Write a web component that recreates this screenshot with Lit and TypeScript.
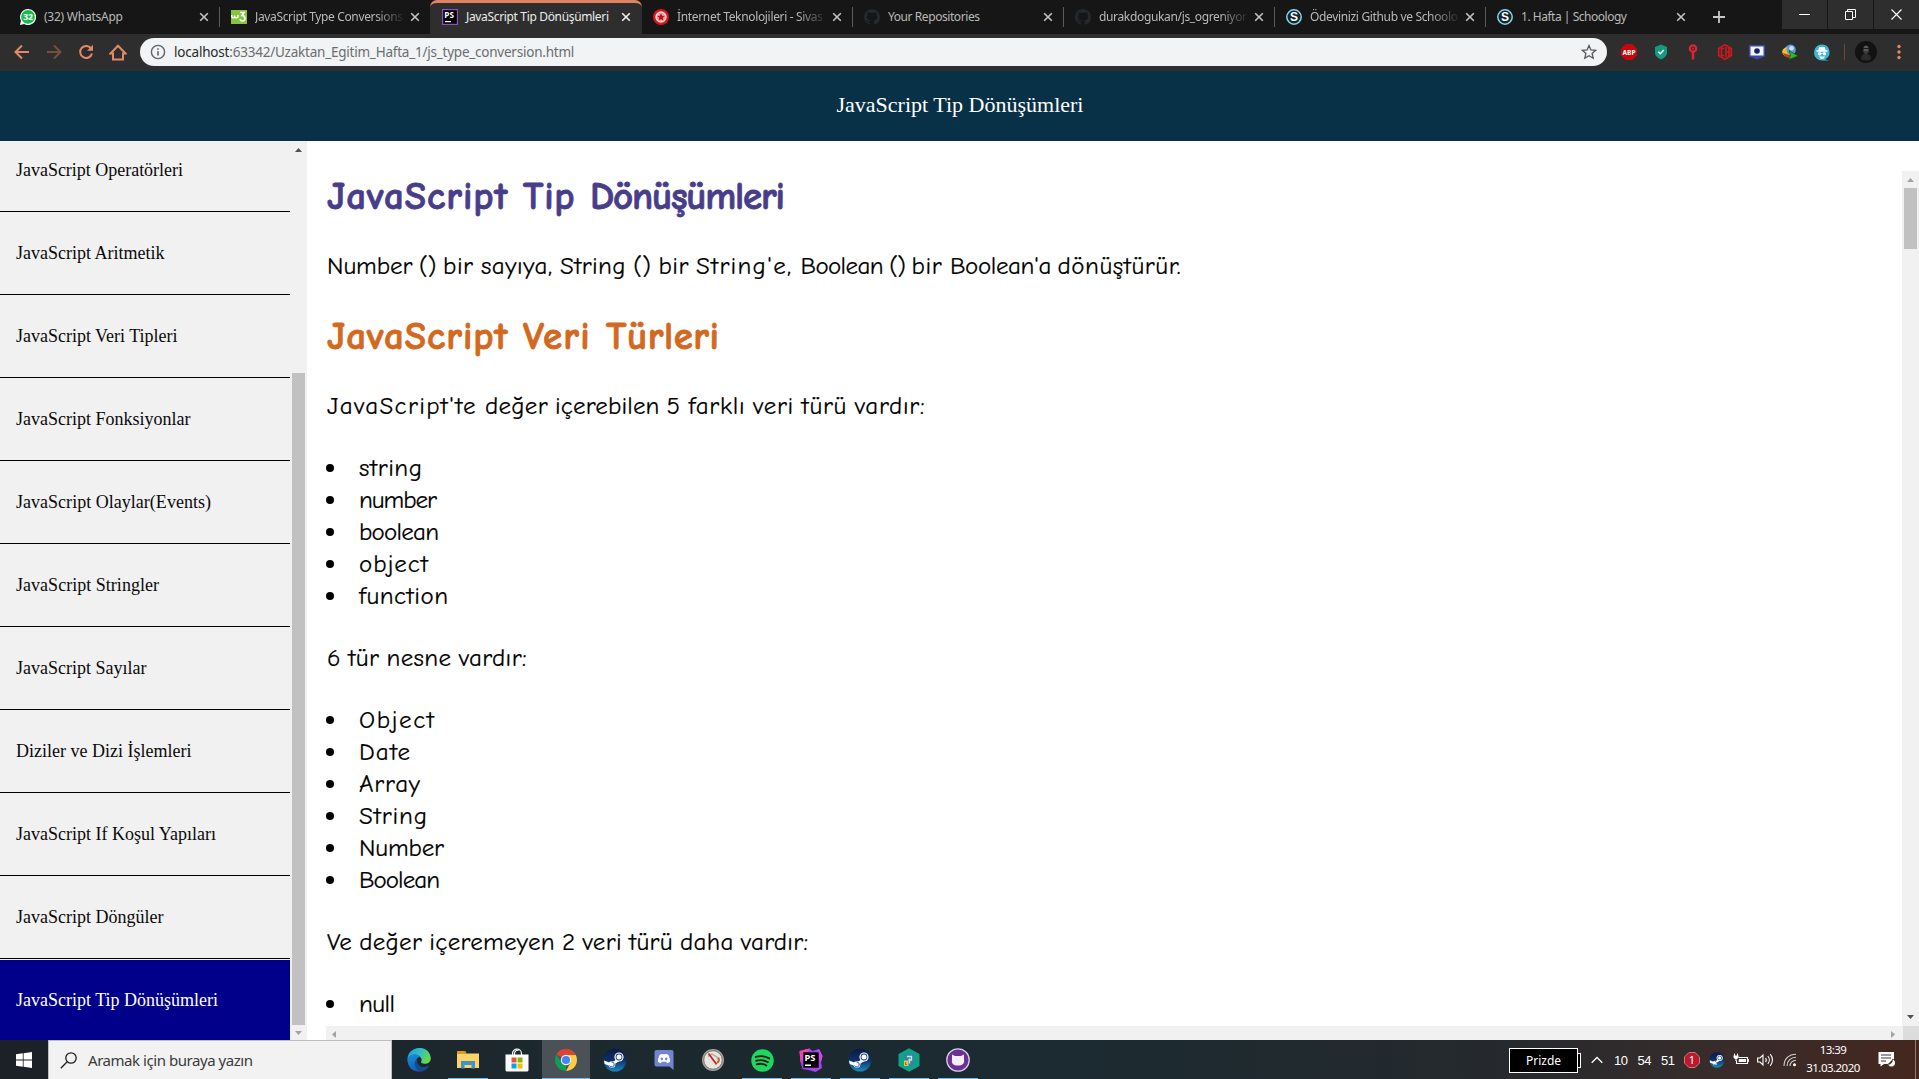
import { LitElement, html, css, nothing } from "lit";
import { customElement, property } from "lit/decorators.js";

/** Single line of text whose letter spacing is tuned so that it spans `w` pixels. */
@customElement("fit-text")
class FitText extends LitElement {
  @property({ type: Number }) w = 0;
  static styles = css`
    :host { display: inline-block; white-space: pre; }
    .run { display: inline-block; white-space: pre; }
  `;
  firstUpdated() {
    const run = this.renderRoot.querySelector(".run") as HTMLElement;
    const text = this.textContent || "";
    const gaps = text.endsWith(" ") ? text.length : text.length - 1;
    if (!this.w || gaps < 1) return;
    const natural = run.getBoundingClientRect().width;
    run.style.letterSpacing = ((this.w - natural) / gaps).toFixed(3) + "px";
  }
  render() {
    return html`<span class="run"><slot></slot></span>`;
  }
}

const steam = (size: number) => html`<svg width=${size} height=${size} viewBox="0 0 24 24">
  <defs><linearGradient id="st" x1="0" y1="0" x2="0" y2="1"><stop offset="0" stop-color="#0b1a45"/><stop offset=".5" stop-color="#0d2f66"/><stop offset="1" stop-color="#1c8ac4"/></linearGradient></defs>
  <circle cx="12" cy="12" r="11.5" fill="url(#st)"/>
  <path d="M1 12.5 7.5 15 12 12.5 15 8l3 4-5.500 3.500L9.500 19 1.600 16z" fill="#fff"/>
  <circle cx="16" cy="9" r="4.600" fill="#fff"/><circle cx="16" cy="9" r="3.400" fill="#16407a"/><circle cx="16" cy="9" r="2.500" fill="#fff"/>
  <circle cx="9" cy="16.500" r="3.300" fill="#fff"/><path d="M6.500 17.500a2.500 2.500 0 1 0 2-3.500" fill="none" stroke="#16508f" stroke-width=".9"/>
</svg>`;

const github = html`<svg width="16" height="16" viewBox="0 0 16 16"><path fill="#24292e" d="M8 0C3.580 0 0 3.580 0 8c0 3.540 2.290 6.530 5.470 7.590.4.070.55-.17.55-.38 0-.19-.01-.82-.01-1.490-2.010.37-2.530-.49-2.690-.94-.09-.23-.48-.94-.82-1.130-.28-.15-.68-.52-.01-.53.63-.01 1.080.58 1.230.82.72 1.210 1.870.87 2.330.66.07-.52.28-.87.51-1.070-1.780-.2-3.640-.89-3.640-3.950 0-.87.31-1.590.82-2.150-.08-.2-.36-1.020.08-2.120 0 0 .67-.21 2.200.82.64-.18 1.320-.27 2-.27s1.360.09 2 .27c1.530-1.040 2.200-.82 2.200-.82.44 1.100.16 1.920.08 2.120.51.56.82 1.270.82 2.150 0 3.070-1.870 3.750-3.650 3.950.29.25.54.73.54 1.480 0 1.070-.01 1.930-.01 2.200 0 .21.15.46.55.38A8.010 8.010 0 0 0 16 8c0-4.420-3.580-8-8-8z"/></svg>`;

const schoology = html`<svg width="16" height="16" viewBox="0 0 16 16"><circle cx="8" cy="8" r="7.200" fill="#17252c" stroke="#86d3ee" stroke-width="1.500"/><text x="8" y="12.300" text-anchor="middle" font-family="Liberation Sans, sans-serif" font-weight="bold" font-size="12" fill="#fff">S</text></svg>`;

const favicons: Record<string, unknown> = {
  whatsapp: html`<svg width="16" height="16" viewBox="0 0 16 16"><path d="M8 0a8 8 0 1 1-3.800 15L0 16l1-4.200A8 8 0 0 1 8 0z" fill="#fff"/><circle cx="8" cy="7.900" r="6.900" fill="#16bd4e"/><text x="8" y="11.200" text-anchor="middle" font-family="Noto Sans, sans-serif" font-weight="bold" font-size="8.500" fill="#fff">32</text></svg>`,
  w3: html`<svg width="16" height="16" viewBox="0 0 16 16"><rect y="1" width="16" height="14" fill="#85c440"/><path d="M.8 6v1.500c0 1.800 2.800 1.800 2.800 0V6.500M3.600 7.500c0 1.800 3.400 1.800 3.400 0V6" fill="none" stroke="#fff" stroke-width="1.400"/><path d="M9 3.500h4L11 6.500c4 0 3.500 5.500.5 5.500-1.300 0-2.200-.6-2.500-1.700" fill="none" stroke="#fff" stroke-width="1.700"/></svg>`,
  ps: html`<svg width="16" height="16" viewBox="0 0 16 16"><rect x=".6" y=".6" width="14.800" height="14.800" fill="#000" stroke="#8d4fc4" stroke-width="1.200"/><text x="2.300" y="8.900" font-family="Noto Sans, sans-serif" font-weight="bold" font-size="8.200" fill="#fff">PS</text><rect x="3" y="12" width="6" height="1.200" fill="#fff"/></svg>`,
  sivas: html`<svg width="16" height="16" viewBox="0 0 16 16"><circle cx="8" cy="8" r="8" fill="#d9151b"/><circle cx="8" cy="8" r="5" fill="#f3a0a2" stroke="#fbd9da" stroke-width="1.400"/><path d="m8 4.300 1.200 2.400 2.600.3-1.900 1.800.5 2.700L8 10.200l-2.400 1.300.5-2.700L4.200 7l2.600-.3z" fill="#c60f16"/></svg>`,
  github,
  schoology,
};

const closeX = (color: string) => html`<svg width="10" height="10" viewBox="0 0 10 10"><path d="m1.200 1.200 7.600 7.600m0-7.600L1.200 8.800" stroke=${color} stroke-width="1.600"/></svg>`;

const tabs = [
  { icon: "whatsapp", title: "(32) WhatsApp", w: 79, active: false },
  { icon: "w3", title: "JavaScript Type Conversions", w: 148, active: false },
  { icon: "ps", title: "JavaScript Tip Dönüşümleri", w: 143, active: true },
  { icon: "sivas", title: "İnternet Teknolojileri - Sivas", w: 146, active: false },
  { icon: "github", title: "Your Repositories", w: 92, active: false },
  { icon: "github", title: "durakdogukan/js_ogreniyor", w: 148, active: false },
  { icon: "schoology", title: "Ödevinizi Github ve Schoolo", w: 148, active: false },
  { icon: "schoology", title: "1. Hafta | Schoology", w: 106, active: false },
];

@customElement("browser-chrome")
class BrowserChrome extends LitElement {
  static styles = css`
    :host { display: block; height: 71px; flex: none; background: #2e2e2e; font-family: "Noto Sans", "Open Sans", sans-serif; }
    svg { display: block; }
    .strip { display: flex; height: 34px; background: #161616; padding-left: 8px; }
    .tab { display: flex; align-items: center; width: 211px; height: 34px; box-sizing: border-box; padding: 0 10px 0 12px; position: relative; color: #b9b9b9; font-size: 12px; line-height: 20px; }
    .label { width: 149px; height: 20px; margin: 0 6px 0 8px; -webkit-mask-image: linear-gradient(90deg, #000 120px, transparent 151px); }
    .label.whole { -webkit-mask-image: none; }
    .tab.line::after { content: ""; position: absolute; right: -1px; top: 7px; width: 1px; height: 20px; background: #5a5a5a; }
    .active { background: #2e2e2e; border-top: 3px solid #df8360; border-radius: 7px 7px 0 0; color: #ececec; padding-bottom: 3px; width: 212px; margin-right: -1px; padding-right: 11px; }
    .plus { width: 46px; display: flex; align-items: center; justify-content: center; }
    .window { display: flex; margin-left: auto; height: 29px; gap: 1px; }
    .window span { display: flex; align-items: center; justify-content: center; width: 45px; background: #2e2e2e; }
    .bar { display: flex; align-items: center; height: 36px; padding-left: 6px; }
    .nav { display: flex; width: 32px; justify-content: center; }
    .omni { display: flex; align-items: center; box-sizing: border-box; width: 1467px; height: 28px; border-radius: 14px; background: #f1f3f4; margin-left: 6px; padding: 0 10px; color: #6a6d70; font-size: 13.500px; line-height: 24px; }
    .url { display: flex; margin-left: 8px; flex: 1; }
    .host { color: #27292b; }
    .exts { display: flex; margin-left: 6px; }
    .exts span { width: 32.100px; display: flex; justify-content: center; }
    .divider { width: 1px; height: 16px; background: #6a4a40; margin: 0 0 0 6px; }
    .avatar { margin-left: 10px; }
    .dots { margin-left: 20px; }
  `;
  render() {
    return html`
      <div class="strip">
        ${tabs.map((t, i) => html`<div class="tab ${t.active ? "active" : ""} ${i !== 1 && i !== 2 && i !== 7 ? "line" : ""}">
          ${favicons[t.icon]}
          <div class="label ${t.w < 146 ? "whole" : ""}"><fit-text w=${t.w}>${t.title}</fit-text></div>
          ${closeX(t.active ? "#f0f0f0" : "#c4c4c4")}
        </div>`)}
        <div class="plus"><svg width="14" height="14" viewBox="0 0 14 14"><path d="M7 1v12M1 7h12" stroke="#c8c8c8" stroke-width="1.800"/></svg></div>
        <div class="window">
          <span><svg width="11" height="11" viewBox="0 0 11 11"><path d="M0 5.500h11" stroke="#fff"/></svg></span>
          <span><svg width="11" height="11" viewBox="0 0 11 11"><path d="M.5 2.500h7v8h-7zM2.500 2.500v-2h8v8h-3" fill="none" stroke="#fff"/></svg></span>
          <span><svg width="11" height="11" viewBox="0 0 11 11"><path d="m.5.5 10 10m0-10-10 10" stroke="#fff" stroke-width="1.200"/></svg></span>
        </div>
      </div>
      <div class="bar">
        <span class="nav"><svg width="16" height="16" viewBox="0 0 16 16"><path d="M15 8H2M8 1.500 1.500 8 8 14.500" fill="none" stroke="#e28a68" stroke-width="2"/></svg></span>
        <span class="nav"><svg width="16" height="16" viewBox="0 0 16 16"><path d="M1 8h13M8 1.500 14.500 8 8 14.500" fill="none" stroke="#73503f" stroke-width="2"/></svg></span>
        <span class="nav"><svg width="16" height="16" viewBox="0 0 16 16"><path d="M13.300 4.800A6 6 0 1 0 14 9.500" fill="none" stroke="#e28a68" stroke-width="2"/><path d="M15 .8v6H9z" fill="#e28a68"/></svg></span>
        <span class="nav"><svg width="18" height="17" viewBox="0 0 18 17"><path d="M1.500 9.500 9 1.800l7.500 7.700H14v6H4v-6z" fill="none" stroke="#e28a68" stroke-width="2"/></svg></span>
        <div class="omni">
          <svg width="16" height="16" viewBox="0 0 16 16"><circle cx="8" cy="8" r="6.600" fill="none" stroke="#5f6368" stroke-width="1.400"/><path d="M8 7.200v4.300M8 4.300v1.500" stroke="#5f6368" stroke-width="1.600"/></svg>
          <div class="url"><fit-text class="host" w="55.500">localhost</fit-text><fit-text w="345">:63342/Uzaktan_Egitim_Hafta_1/js_type_conversion.html</fit-text></div>
          <svg width="16" height="16" viewBox="0 0 16 16"><path d="m8 1.500 1.900 4.400 4.800.4-3.600 3.200 1.100 4.700L8 11.700l-4.200 2.500 1.100-4.700L1.300 6.300l4.800-.4z" fill="none" stroke="#55585c" stroke-width="1.300"/></svg>
        </div>
        <div class="exts">
          <span><svg width="16" height="16" viewBox="0 0 16 16"><path d="M4.700 0h6.600L16 4.700v6.600L11.300 16H4.700L0 11.300V4.700z" fill="#c8060c"/><text x="1.500" y="10.800" textLength="13" lengthAdjust="spacingAndGlyphs" font-family="Noto Sans, sans-serif" font-weight="bold" font-size="7.600" fill="#fff">ABP</text></svg></span>
          <span><svg width="14" height="16" viewBox="0 0 14 16"><path d="M7 .5 13 3v6c0 3-3.500 5.500-6 6.500C4.500 14.500 1 12 1 9V3z" fill="#159a80"/><path d="m4.300 7.700 2 2 3.500-3.700" fill="none" stroke="#fff" stroke-width="1.500"/></svg></span>
          <span><svg width="10" height="16" viewBox="0 0 10 16"><circle cx="5" cy="4.500" r="3.200" fill="none" stroke="#dd2430" stroke-width="2.300"/><circle cx="5" cy="4.500" r="1" fill="#dd2430"/><path d="M5 7v8.500" stroke="#dd2430" stroke-width="2.600"/></svg></span>
          <span><svg width="16" height="16" viewBox="0 0 16 16"><path d="m8 .8 6.300 3.600v7.200L8 15.200l-6.300-3.600V4.400z" fill="none" stroke="#cf1820" stroke-width="1.700"/><path d="M7.300 4.500H4.500v7h2.800M9 3v10m3-9v8M9 8h3" fill="none" stroke="#cf1820" stroke-width="1.700"/></svg></span>
          <span><svg width="16" height="16" viewBox="0 0 16 16"><path d="M0 1h16v11.500L8 15.500 0 12.500z" fill="#3b46b0"/><path d="M1.500 2.500h13v9h-13z" fill="#f3f4ff"/><circle cx="8" cy="7" r="2.800" fill="#18216a"/></svg></span>
          <span><svg width="17" height="16" viewBox="0 0 17 16"><circle cx="9.500" cy="5.800" r="5.300" fill="#5e9adf"/><circle cx="10.500" cy="4.300" r="2.300" fill="#c9e3ff"/><path d="M6 3c-7 2-6.500 9 2 10 2.500.2 3-.6 3.500-2C7 11 4.500 8 6 3z" fill="#f0c22a"/><path d="M2 9c1.500 5 7 6.500 10 3l-5-1.500z" fill="#c43c1c"/><path d="m8 6.500 9 5.500-9 3.500 1.500-4.500z" fill="#35b435" stroke="#145c14" stroke-width=".8"/></svg></span>
          <span><svg width="16" height="17" viewBox="0 0 16 17"><path d="M8 .5a7.700 7.700 0 0 1 3 14.700l4 1.300H8A8 8 0 0 1 8 .5z" fill="#3fb8d6"/><path d="m5.300 3 5.400 0 1 3.300h1.800v1.400h-11V6.300h1.800z" fill="#fff"/><circle cx="5.600" cy="9.800" r="1.700" fill="#fff"/><circle cx="10.400" cy="9.800" r="1.700" fill="#fff"/><path d="M5 12.500h6l-1.500 2.200h-3zM6 9.200h4v.9H6z" fill="#fff"/></svg></span>
        </div>
        <div class="divider"></div>
        <svg class="avatar" width="22" height="22" viewBox="0 0 22 22"><circle cx="11" cy="11" r="11" fill="#121212"/><path d="M8.500 7c0-3.500 5-3.500 5 0v3.500c0 3-5 3-5 0z" fill="#5a5a5a"/><path d="M6 18c0-4 2-5 5-5s5 1 5 5c-2 2-8 2-10 0z" fill="#2b2b2b"/><path d="M8 7.500h6M9 11h4" stroke="#1c1c1c"/></svg>
        <svg class="dots" width="4" height="16" viewBox="0 0 4 16"><g fill="#e28a68"><circle cx="2" cy="2.500" r="1.700"/><circle cx="2" cy="8" r="1.700"/><circle cx="2" cy="13.500" r="1.700"/></g></svg>
      </div>`;
  }
}

const links: [string, number][] = [
  ["JavaScript Operatörleri", 167],
  ["JavaScript Aritmetik", 148.500],
  ["JavaScript Veri Tipleri", 161.500],
  ["JavaScript Fonksiyonlar", 174.500],
  ["JavaScript Olaylar(Events)", 195],
  ["JavaScript Stringler", 143],
  ["JavaScript Sayılar", 130.500],
  ["Diziler ve Dizi İşlemleri", 175.500],
  ["JavaScript If Koşul Yapıları", 200],
  ["JavaScript Döngüler", 147.500],
];

@customElement("lesson-nav")
class LessonNav extends LitElement {
  static styles = css`
    :host { display: flex; width: 307px; flex: none; background: #f1f1f1; overflow: hidden; }
    .list { width: 290px; color: #0a0a0a; font-family: "Liberation Serif", serif; font-size: 18px; }
    .item { display: block; height: 83px; box-sizing: border-box; border-bottom: 1px solid #000; padding: 24px 0 0 16px; line-height: 34px; }
    .item:first-child { height: 71px; padding-top: 12px; }
    .current { height: 80px; margin-top: 1px; background: #00008b; color: #fff; border: 0; padding-top: 23px; }
    .scroll { width: 17px; display: flex; flex-direction: column; align-items: center; }
    .scroll svg { display: block; }
    .up { margin-top: 7px; }
    .thumb { width: 13px; height: 652px; background: #c1c1c1; margin: 221px 0 6px; }
  `;
  render() {
    return html`
      <div class="list">
        ${links.map(([t, w]) => html`<a class="item"><fit-text w=${w}>${t}</fit-text></a>`)}
        <a class="item current"><fit-text w="202">JavaScript Tip Dönüşümleri</fit-text></a>
      </div>
      <div class="scroll">
        <svg class="up" width="7" height="4" viewBox="0 0 7 4"><path d="M0 4 3.500 0 7 4z" fill="#505050"/></svg>
        <div class="thumb"></div>
        <svg width="7" height="4" viewBox="0 0 7 4"><path d="M0 0h7L3.500 4z" fill="#a3a3a3"/></svg>
      </div>`;
  }
}

@customElement("lesson-body")
class LessonBody extends LitElement {
  static styles = css`
    :host { display: flex; flex: 1; min-width: 0; background: #fff; }
    .col { display: flex; flex-direction: column; flex: 1; padding-left: 19px; min-width: 0; }
    .text { height: 885px; overflow: hidden; color: #000; font-family: "Comic Sans MS", "Comic Neue", Inter, "Noto Sans", sans-serif; font-size: 25px; line-height: 32px; word-spacing: -1.500px; -webkit-text-stroke: 0.2px currentColor; }
    h1, h2 { display: flex; padding-left: 1px; font-size: 39px; height: 50px; line-height: 52px; font-weight: 700; word-spacing: 0; -webkit-text-stroke: 0.8px currentColor; }
    h1 { color: #483d8b; margin: 30px 0 29px; }
    h2 { color: #d2691e; margin: -1px 0 29px; }
    p { display: flex; margin: 0 0 30px; height: 32px; padding-left: 1px; }
    ul { list-style: none; margin: 0 0 30px; padding: 0; }
    li { display: flex; align-items: center; height: 32px; }
    li::before { content: ""; width: 8px; height: 8px; border-radius: 50%; background: #000; margin-right: 25px; }
    svg { display: block; }
    .hscroll { height: 14px; background: #f1f1f1; display: flex; align-items: center; justify-content: space-between; padding: 2px 7px 0 6px; box-sizing: border-box; }
    .vscroll { width: 17px; display: flex; flex-direction: column; align-items: center; margin-top: 30px; background: #f1f1f1; }
    .vscroll .up { margin: 7px 0 6px; }
    .thumb { width: 13px; height: 61px; background: #c1c1c1; }
    .vscroll .down { margin: auto 0 7px; }
    .corner { width: 16px; height: 14px; background: #dcdcdc; align-self: flex-end; }
  `;
  private runs(parts: [string, number][]) {
    return parts.map(([t, w]) => html`<fit-text w=${w}>${t}</fit-text>`);
  }
  private bullets(items: [string, number][]) {
    return html`<ul>${items.map(([t, w]) => html`<li><fit-text w=${w}>${t}</fit-text></li>`)}</ul>`;
  }
  render() {
    return html`
      <div class="col">
        <div class="text">
          <h1>${this.runs([["JavaScript ", 196], ["Tip ", 67], ["Dönüşümleri", 195]])}</h1>
          <p>${this.runs([["Number () ", 116], ["bir sayıya, ", 117], ["String () ", 98.500], ["bir ", 37.500], ["String'e, ", 104.500], ["Boolean () ", 111], ["bir ", 38.500], ["Boolean'a ", 107.500], ["dönüştürür.", 123]])}</p>
          <h2>${this.runs([["JavaScript ", 196], ["Veri ", 83], ["Türleri", 113]])}</h2>
          <p>${this.runs([["JavaScript'te ", 158], ["değer ", 70], ["içerebilen ", 111.500], ["5 farklı ", 86.500], ["veri türü vardır:", 171.500]])}</p>
          ${this.bullets([["string", 63], ["number", 78], ["boolean", 80], ["object", 69], ["function", 89]])}
          <p><fit-text w="199.500">6 tür nesne vardır:</fit-text></p>
          ${this.bullets([["Object", 75], ["Date", 51], ["Array", 61], ["String", 68], ["Number", 85], ["Boolean", 81]])}
          <p><fit-text w="481">Ve değer içeremeyen 2 veri türü daha vardır:</fit-text></p>
          ${this.bullets([["null", 36]])}
        </div>
        <div class="hscroll">
          <svg width="4" height="7" viewBox="0 0 4 7"><path d="M4 0v7L0 3.500z" fill="#a3a3a3"/></svg>
          <svg width="4" height="7" viewBox="0 0 4 7"><path d="M0 0v7l4-3.500z" fill="#a3a3a3"/></svg>
        </div>
      </div>
      <div class="vscroll">
        <svg class="up" width="7" height="4" viewBox="0 0 7 4"><path d="M0 4 3.500 0 7 4z" fill="#a3a3a3"/></svg>
        <div class="thumb"></div>
        <svg class="down" width="7" height="4" viewBox="0 0 7 4"><path d="M0 0h7L3.500 4z" fill="#505050"/></svg>
        <div class="corner"></div>
      </div>`;
  }
}

const apps: { art: unknown; run?: boolean; front?: boolean }[] = [
  { art: html`<svg width="24" height="24" viewBox="0 0 24 24"><defs><linearGradient id="e1" x1="0" y1="0" x2="1" y2=".4"><stop offset="0" stop-color="#1d9ae0"/><stop offset=".6" stop-color="#31c3c0"/><stop offset="1" stop-color="#64d84f"/></linearGradient><linearGradient id="e2" x1="0" y1="0" x2=".6" y2="1"><stop offset="0" stop-color="#1a8fdc"/><stop offset="1" stop-color="#1457b0"/></linearGradient></defs><path d="M.5 10.500C2-3.500 23-3.500 23.800 10.200c0 4-3.200 5.600-6 5.600-3.200 0-4.300-1.200-3.500-2.500C16.500 9.500 8 2.500.5 10.500z" fill="url(#e1)"/><path d="M.3 10.800C3 5.500 10.500 5 13 9c-6 1-5.500 10 3.500 10.200 2.500 0 4.200-.8 5.500-1.500C17 26.500.5 26 .3 10.800z" fill="url(#e2)"/><path d="M10.500 10.500c-5.500 4-2.500 11.500 3.500 13 4-.4 6.600-3 8-5.800-6.500 3.300-13 .3-11.500-7.200z" fill="#144a8e"/></svg>` },
  { run: true, art: html`<svg width="22" height="20" viewBox="0 0 22 20"><path d="M0 1.500h8l2 2H0z" fill="#d99a1c"/><path d="M0 3.500h22V18H0z" fill="#fbd366"/><path d="M0 1h8.500v3H0z" fill="#dd9a1e"/><path d="M4 11h14v7.500h-3.500V15h-7v3.500H4z" fill="#3b94cf"/></svg>` },
  { art: html`<svg width="24" height="24" viewBox="0 0 24 24"><path d="M7.500 7V5.500a4.500 4.500 0 0 1 9 0V7M9.500 7V5.500a4 4 0 0 1 5-3.500" fill="none" stroke="#fff" stroke-width="1.200"/><path d="M.5 6.500h23v16l-1 1h-21l-1-1z" fill="#fff"/><path d="M6.500 9.500h5v5h-5z" fill="#f25022"/><path d="M12.500 9.500h5v5h-5z" fill="#7fba00"/><path d="M6.500 15.500h5v5h-5z" fill="#00a4ef"/><path d="M12.500 15.500h5v5h-5z" fill="#ffb900"/></svg>` },
  { run: true, front: true, art: html`<svg width="22" height="22" viewBox="0 0 22 22"><path d="M11 11 1.500 5.500A11 11 0 0 1 20.500 5.500z" fill="#db4437"/><path d="M11 11 11 22A11 11 0 0 1 1.500 5.500L6.500 13.500z" fill="#0f9d58"/><path d="M11 6h9.800A11 11 0 0 1 11 22l4.500-8.500z" fill="#ffcd40"/><path d="M1.500 5.500A11 11 0 0 1 20.700 6H11z" fill="#db4437"/><circle cx="11" cy="11" r="5.200" fill="#f4f4f4"/><circle cx="11" cy="11" r="4.100" fill="#4285f4"/></svg>` },
  { art: steam(24) },
  { art: html`<svg width="20" height="22" viewBox="0 0 20 22"><path d="M2.500 1h15A2 2 0 0 1 19.500 3v18l-4-3.500h-13a2 2 0 0 1-2-2V3a2 2 0 0 1 2-2z" fill="#7285d0"/><path d="M5.800 5.800c1.500-1 2.300-.8 2.500-.5h3.400c.2-.3 1-.5 2.500.5 1.500 2.500 2 5 1.800 7-1 1-2.200 1.200-3 1.200l-.8-1.300H7.800L7 14c-.8 0-2-.2-3-1.200-.2-2 .3-4.500 1.800-7z" fill="#fff"/><ellipse cx="7.800" cy="10" rx="1.200" ry="1.400" fill="#7285d0"/><ellipse cx="12.200" cy="10" rx="1.200" ry="1.400" fill="#7285d0"/></svg>` },
  { art: html`<svg width="24" height="24" viewBox="0 0 24 24"><circle cx="12" cy="12" r="11" fill="#a6a39f"/><circle cx="12" cy="12" r="9.300" fill="#e9e6df" stroke="#77736f" stroke-width="1"/><path d="M7 8.500 11 6l5 3 1.500 4-3 4" fill="none" stroke="#b8b0a4" stroke-width="1.500"/><path d="m7.500 5.500 7.800 10.500" stroke="#c4201e" stroke-width="1.700"/><path d="M17.500 9.500c1 2 .5 4-1 5.500" fill="none" stroke="#d4552b" stroke-width="1.500"/></svg>` },
  { run: true, art: html`<svg width="23" height="23" viewBox="0 0 24 24"><circle cx="12" cy="12" r="11.700" fill="#1ed760"/><path d="M5 8.300c4.500-1.400 10-.9 14 1.500M5.500 12.300c4-1.200 8.300-.7 12 1.400M6 16c3.400-1 7-.6 10 1.200" fill="none" stroke="#142018" stroke-width="2" stroke-linecap="round"/></svg>` },
  { run: true, art: html`<svg width="24" height="24" viewBox="0 0 24 24"><path d="m.5 3 10-2.500 3 2.500 6.500-2 3.500 7-1.500 6 1 6-6.500 4-7-2-6-1L1.500 14z" fill="#a445ec"/><path d="m.5 3 10-2.500L6 10 1.500 14z" fill="#ef45a9"/><path d="m20 1 3.500 7-1.500 6-5-8z" fill="#c44cf1"/><path d="M4.300 4.300h15.400v15.400H4.300z" fill="#000"/><text x="5.500" y="12.500" font-family="Noto Sans, sans-serif" font-weight="bold" font-size="9.300" fill="#fff">PS</text><path d="M6 16.500h6V18H6z" fill="#fff"/></svg>` },
  { run: true, art: steam(24) },
  { run: true, art: html`<svg width="22" height="24" viewBox="0 0 22 24"><path d="M11 .3 21.500 6v12L11 23.700.5 18V6z" fill="#0ea287"/><path d="M6.500 6h9.500v12H6.500z" fill="#2f86a8"/><path d="M9 8.500h4.500V12h-3M11.500 10.500v5" fill="none" stroke="#cde5ef" stroke-width="1.300"/><path d="M6 12.500h4.500V18H6z" fill="#edc14f"/><path d="M7.500 14v2.500h1.500" stroke="#7a5a10" fill="none" stroke-width=".8"/></svg>` },
  { run: true, art: html`<svg width="24" height="24" viewBox="0 0 24 24"><circle cx="12" cy="12" r="11.200" fill="#6c2f93" stroke="#d8cce2" stroke-width="1.300"/><path d="m6 6.500 3 1.500h6l3-1.500v5.500c.8 3.500-1.500 5.500-6 5.500s-6.800-2-6-5.500z" fill="#f4eff7"/></svg>` },
];

@customElement("task-bar")
class TaskBar extends LitElement {
  static styles = css`
    :host { display: flex; height: 39px; flex: none; color: #fff; font-family: "Noto Sans", "Open Sans", sans-serif; background: linear-gradient(90deg, #1b2126 0, #1c282e 25%, #1b2b31 55%, #25292d 78%, #372c2b 89%, #44271f 100%); }
    svg { display: block; }
    .start { width: 48px; display: flex; align-items: center; justify-content: center; padding-top: 1px; box-sizing: border-box; }
    .search { width: 344px; box-sizing: border-box; background: #f2f2f2; border: 1px solid #bdbdbd; border-bottom: 0; color: #3b3b3b; display: flex; align-items: center; padding-left: 11px; font-size: 15px; line-height: 24px; }
    .search fit-text { margin: 0 0 1px 11px; }
    .apps { display: flex; gap: 1px; margin-left: 3px; }
    .app { width: 48px; height: 39px; display: flex; align-items: center; justify-content: center; box-sizing: border-box; padding-top: 1px; position: relative; }
    .run::after { content: ""; position: absolute; left: 4px; right: 4px; bottom: 0; height: 1px; background: #76b9ed; }
    .front { background: #4a5257; }
    .front::after { left: 0; right: 0; }
    .tray { margin-left: auto; display: flex; align-items: center; padding-right: 3px; }
    .battery { box-sizing: border-box; width: 69px; height: 25px; border: 1px solid #fff; background: #000; display: flex; justify-content: center; align-items: center; font-size: 12px; line-height: 20px; margin-top: 2px; }
    .nub { width: 2px; height: 13px; border: 1px solid #fff; border-left: 0; background: #000; margin-top: 2px; }
    .temps { display: flex; gap: 10px; width: 66px; margin: 1px 0 0 11px; font-family: "Liberation Sans", sans-serif; font-size: 13px; }
    .slot { width: 24.400px; display: flex; justify-content: center; padding-top: 1px; }
    .chev { margin: 1px 0 0 10px; }
    .clock { display: flex; flex-direction: column; align-items: center; width: 62px; font-size: 11.500px; line-height: 18px; margin-bottom: 1px; }
    .note { margin-left: 14px; }
    .edge { width: 1px; height: 39px; background: #8c7a76; margin-left: 20px; }
  `;
  render() {
    return html`
      <div class="start"><svg width="16" height="16" viewBox="0 0 16 16"><path d="M0 2.200 6.800 1.300V7.600H0zM7.600 1.200 16 0v7.600H7.600zM0 8.400h6.800v6.300L0 13.800zM7.600 8.400H16V16l-8.400-1.200z" fill="#fff"/></svg></div>
      <div class="search">
        <svg width="17" height="17" viewBox="0 0 17 17"><circle cx="11" cy="6" r="5.200" fill="none" stroke="#222" stroke-width="1.300"/><path d="M7.200 9.800.8 16.200" stroke="#222" stroke-width="1.400"/></svg>
        <fit-text w="165">Aramak için buraya yazın</fit-text>
      </div>
      <div class="apps">${apps.map((a) => html`<div class="app ${a.run ? "run" : ""} ${a.front ? "front" : ""}">${a.art || nothing}</div>`)}</div>
      <div class="tray">
        <div class="battery"><fit-text w="35">Prizde</fit-text></div><div class="nub"></div>
        <svg class="chev" width="12" height="8" viewBox="0 0 12 8"><path d="M.7 6.800 6 1.500l5.300 5.300" fill="none" stroke="#fff" stroke-width="1.300"/></svg>
        <div class="temps"><fit-text w="14">10</fit-text><fit-text w="14">54</fit-text><fit-text w="14">51</fit-text></div>
        <span class="slot"><svg width="16" height="16" viewBox="0 0 16 16"><path d="M4.900.5h6.200l4.400 4.400v6.200l-4.400 4.400H4.900L.5 11.100V4.900z" fill="#b91b2c" stroke="#e58a90" stroke-width=".8"/><text x="8" y="12" text-anchor="middle" font-family="Noto Sans, sans-serif" font-size="11" fill="#fff">1</text></svg></span>
        <span class="slot">${steam(16)}</span>
        <span class="slot"><svg width="16" height="14" viewBox="0 0 16 14"><path d="M5.500 4.500h9v6h-11v-3" fill="none" stroke="#fff" stroke-width="1.100"/><path d="M6 6h7v3H5.500z" fill="#fff"/><path d="M15.300 6v3M1.500.5v2.500M4.500.5v2.500M3 6v2" stroke="#fff" stroke-width="1.100"/><path d="M.5 2.500h5v1.700L4.200 6H1.800L.5 4.200z" fill="#fff"/></svg></span>
        <span class="slot"><svg width="17" height="14" viewBox="0 0 17 14"><path d="M.6 5h2.400l3-3v10l-3-3H.6zM8.500 5c1 1.200 1 2.800 0 4M10.800 3c2 2.300 2 5.700 0 8M13.200 1.200c3 3.400 3 8.200 0 11.600" fill="none" stroke="#fff" stroke-width="1.100"/></svg></span>
        <span class="slot"><svg width="14" height="14" viewBox="0 0 14 14"><g fill="none" stroke="#d6d0cf" stroke-width="1.100"><path d="M1 13C1 6 6 1.200 13 1.200M4 13c0-5 4-8.800 9-8.800M7 13c0-3.300 2.700-5.800 6-5.800"/></g><circle cx="11.500" cy="11.700" r="1.500" fill="#fff"/></svg></span>
        <div class="clock"><fit-text w="27">13:39</fit-text><fit-text w="54">31.03.2020</fit-text></div>
        <svg class="note" width="17" height="17" viewBox="0 0 17 17"><path d="M.5 1h15.500v8.500h-2.500L10 13H6l-3.500 2.500V13H.5z" fill="#fff"/><path d="M3 4h10M3 7h10M3 10h5" stroke="#42302c" stroke-width="1.200"/><path d="M14.500 8a4 4 0 1 1-4.800 5.200c3 .5 5-2 4.800-5.200z" fill="#fff" stroke="#42302c" stroke-width=".7"/></svg>
        <div class="edge"></div>
      </div>`;
  }
}

@customElement("app-root")
class AppRoot extends LitElement {
  static styles = css`
    :host { display: flex; flex-direction: column; width: 1919px; height: 1079px; overflow: hidden; background: #fff; }
    .banner { height: 70px; flex: none; box-sizing: border-box; padding: 0 0 2px 1px; background: #083046; color: #fff; display: flex; align-items: center; justify-content: center; font-family: "Liberation Serif", serif; font-size: 22px; line-height: 30px; }
    .page { display: flex; height: 899px; flex: none; }
  `;
  render() {
    return html`
      <browser-chrome></browser-chrome>
      <div class="banner"><fit-text w="247">JavaScript Tip Dönüşümleri</fit-text></div>
      <div class="page"><lesson-nav></lesson-nav><lesson-body></lesson-body></div>
      <task-bar></task-bar>`;
  }
}
